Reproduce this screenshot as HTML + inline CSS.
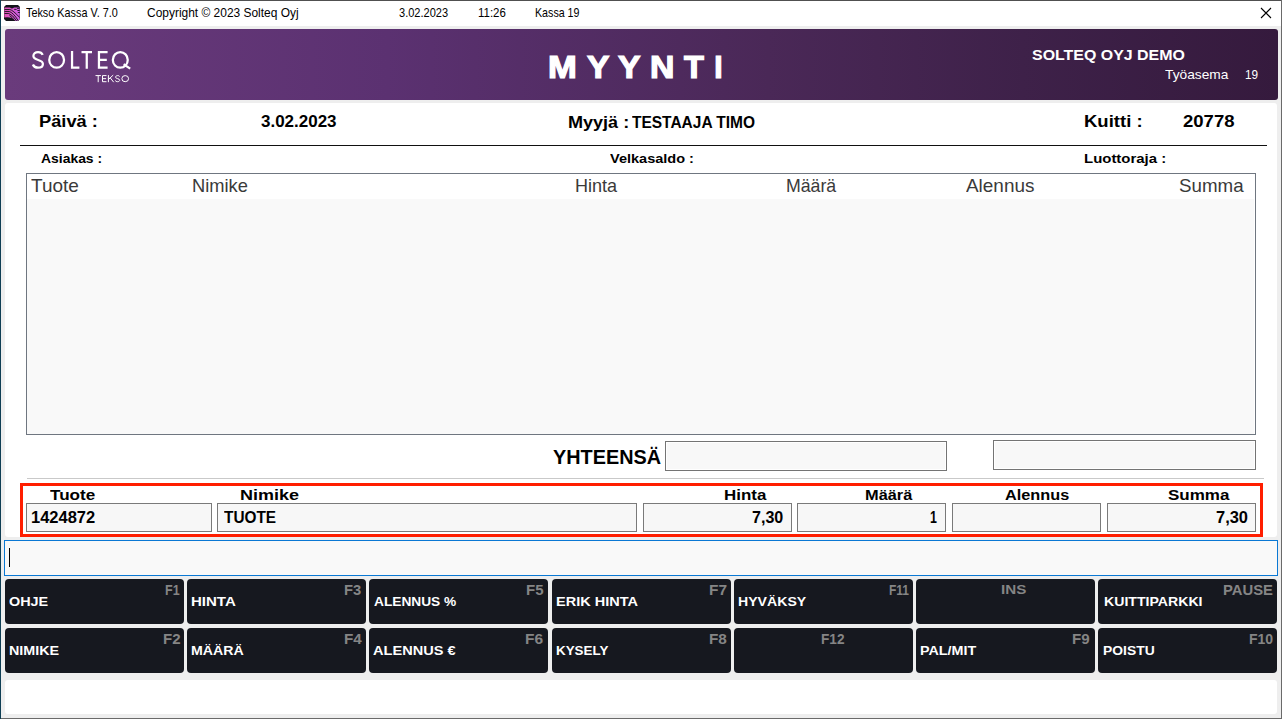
<!DOCTYPE html>
<html><head><meta charset="utf-8"><style>
html,body{margin:0;padding:0;width:1282px;height:719px;overflow:hidden;background:#eee}
div,span,svg{position:absolute}
span{font-family:"Liberation Sans",sans-serif;line-height:1;white-space:pre;transform-origin:0 0}
</style></head><body>
<div style="left:0px;top:0px;width:1282px;height:719px;background:#eeeeee"></div><div style="left:1px;top:1px;width:1280px;height:25px;background:#ffffff"></div><div style="left:0px;top:0px;width:1282px;height:1px;background:#505050"></div><div style="left:0px;top:0px;width:1px;height:719px;background:#0f3e54"></div><div style="left:1281px;top:0px;width:1px;height:719px;background:#6a6a6a"></div><div style="left:1px;top:718px;width:1281px;height:1px;background:#6a6a6a"></div><div style="left:5px;top:29px;width:1273px;height:71px;background:linear-gradient(90deg,#6a3b7c 0%,#5b3171 30%,#4a2857 60%,#3e2149 80%,#351a3d 100%);border-radius:3px"></div><div style="left:5px;top:103px;width:1272px;height:434px;background:#fff;border-radius:3px"></div><div style="left:20px;top:145px;width:1247px;height:1px;background:#111"></div><div style="left:26px;top:173px;width:1230px;height:262px;background:#fff;border:1px solid #6f7680;box-sizing:border-box"></div><div style="left:27px;top:199px;width:1227px;height:235px;background:#f9f9f9"></div><div style="left:665px;top:441px;width:282px;height:30px;background:#f8f8f8;border:1px solid #747474;box-shadow:inset 0 0 0 1px #fff;box-sizing:border-box"></div><div style="left:993px;top:440px;width:263px;height:30px;background:#f8f8f8;border:1px solid #747474;box-shadow:inset 0 0 0 1px #fff;box-sizing:border-box"></div><div style="left:27px;top:478px;width:1237px;height:1px;background:#c9c9c9"></div><div style="left:20px;top:483px;width:1243px;height:54px;border:3px solid #ff1e00;box-sizing:border-box"></div><div style="left:26px;top:503px;width:186px;height:29px;background:#f7f7f7;border:1px solid #7a7a7a;box-sizing:border-box"></div><div style="left:217px;top:503px;width:420px;height:29px;background:#f7f7f7;border:1px solid #7a7a7a;box-sizing:border-box"></div><div style="left:643px;top:503px;width:149px;height:29px;background:#f7f7f7;border:1px solid #7a7a7a;box-sizing:border-box"></div><div style="left:797px;top:503px;width:149px;height:29px;background:#f7f7f7;border:1px solid #7a7a7a;box-sizing:border-box"></div><div style="left:952px;top:503px;width:149px;height:29px;background:#f7f7f7;border:1px solid #7a7a7a;box-sizing:border-box"></div><div style="left:1107px;top:503px;width:149px;height:29px;background:#f7f7f7;border:1px solid #7a7a7a;box-sizing:border-box"></div><div style="left:4px;top:540px;width:1274px;height:36px;background:#f9f9f9;border:1px solid #0a78d4;box-sizing:border-box"></div><div style="left:9px;top:548px;width:1px;height:19px;background:#000"></div><div style="left:5px;top:579px;width:179px;height:45px;background:#16181f;border-radius:4px"></div><div style="left:187px;top:579px;width:179px;height:45px;background:#16181f;border-radius:4px"></div><div style="left:369px;top:579px;width:179px;height:45px;background:#16181f;border-radius:4px"></div><div style="left:552px;top:579px;width:179px;height:45px;background:#16181f;border-radius:4px"></div><div style="left:734px;top:579px;width:179px;height:45px;background:#16181f;border-radius:4px"></div><div style="left:916px;top:579px;width:179px;height:45px;background:#16181f;border-radius:4px"></div><div style="left:1098px;top:579px;width:179px;height:45px;background:#16181f;border-radius:4px"></div><div style="left:5px;top:628px;width:179px;height:45px;background:#16181f;border-radius:4px"></div><div style="left:187px;top:628px;width:179px;height:45px;background:#16181f;border-radius:4px"></div><div style="left:369px;top:628px;width:179px;height:45px;background:#16181f;border-radius:4px"></div><div style="left:552px;top:628px;width:179px;height:45px;background:#16181f;border-radius:4px"></div><div style="left:734px;top:628px;width:179px;height:45px;background:#16181f;border-radius:4px"></div><div style="left:916px;top:628px;width:179px;height:45px;background:#16181f;border-radius:4px"></div><div style="left:1098px;top:628px;width:179px;height:45px;background:#16181f;border-radius:4px"></div><div style="left:5px;top:680px;width:1272px;height:34px;background:#fff;border-radius:3px"></div>
<svg style="position:absolute;left:4px;top:5px" width="16" height="16" viewBox="0 0 16 16">
<defs><linearGradient id="ig" x1="0" x2="1" y1="0" y2="0"><stop offset="0" stop-color="#e04fb4"/><stop offset="1" stop-color="#cf5fe6"/></linearGradient></defs>
<path d="M2,0 H14 L16,2 V14 L14,16 H2 L0,14 V2 Z" fill="#13141a"/>
<path d="M0.3,2.6 L6,2.6 Q8,4.4 10,2.6 L15.7,2.6 L15.7,14 L14,15.7 L11,15.7 Q7,11.2 0.3,12.6 Z" fill="url(#ig)"/>
<g fill="none" stroke="#13141a" stroke-width="0.9">
<path d="M0.5,4.5 H5.8 Q9,5.2 15.8,12.6"/>
<path d="M0.5,6.5 H5.2 Q9,7.4 14.2,15.6"/>
<path d="M0.5,8.5 H4.8 Q8.4,9.6 12.6,15.8"/>
<path d="M5.5,10.6 Q7.8,11.8 10.8,15.8"/>
<path d="M10.2,4.4 H12.6 M13,3.4 H15.6 M13.4,5.5 H15.6 M13.8,7.5 H15.8"/>
</g></svg>
<svg style="position:absolute;left:0;top:0" width="200" height="100" viewBox="0 0 200 100">
<g fill="none" stroke="#fff" stroke-width="2.25" stroke-linecap="butt">
<path d="M42.7,54.9 C41.9,53.0 40.2,52.1 38.1,52.1 C35.4,52.1 33.4,53.7 33.4,56.0 C33.4,61.0 42.9,59.0 42.9,63.9 C42.9,66.3 40.8,67.7 38.0,67.7 C35.5,67.7 33.7,66.5 32.9,64.5"/>
<ellipse cx="56.65" cy="59.9" rx="7.4" ry="7.8"/>
<path d="M72.05,51.05 V67.7 H79.4"/>
<path d="M81.5,52.1 H92 M86.75,52.1 V68.75"/>
<path d="M107.6,52.1 H98.95 V67.7 H107.6 M98.95,59.9 H106.8"/>
<ellipse cx="120.3" cy="59.9" rx="7.45" ry="7.8"/>
<path d="M123.6,64.2 L130.2,68.6"/>
</g>
<g fill="none" stroke="#fff" stroke-width="1.0">
<path d="M95.5,75.6 H100.9 M98.2,75.6 V82.2"/>
<path d="M106.5,75.6 H102.5 V81.7 H106.5 M102.5,78.65 H106.1"/>
<path d="M108.4,75.1 V82.2 M113.2,75.1 L108.5,79.4 M110.2,77.8 L113.7,82.2"/>
<path d="M119.6,76.5 C119.2,75.8 118.5,75.6 117.6,75.6 C116.4,75.6 115.6,76.2 115.6,77.2 C115.6,79.0 119.7,78.3 119.7,80.2 C119.7,81.2 118.8,81.7 117.5,81.7 C116.4,81.7 115.6,81.2 115.2,80.5"/>
<ellipse cx="125.2" cy="78.65" rx="3.35" ry="3.05"/>
</g></svg>
<svg style="position:absolute;left:1260px;top:7px" width="12" height="12" viewBox="0 0 12 12">
<path d="M1 1 L11 11 M11 1 L1 11" stroke="#000" stroke-width="1.1"/></svg>
<span style="left:547.85px;top:51.800000000000004px;font-size:30px;font-weight:700;color:#fff;-webkit-text-stroke:1.2px #fff;transform:scale(1.1522,1.02)">M</span><span style="left:586.6px;top:51.800000000000004px;font-size:30px;font-weight:700;color:#fff;-webkit-text-stroke:1.2px #fff;transform:scale(1.12,1.02)">Y</span><span style="left:617.5px;top:51.800000000000004px;font-size:30px;font-weight:700;color:#fff;-webkit-text-stroke:1.2px #fff;transform:scale(1.125,1.02)">Y</span><span style="left:649.87px;top:51.800000000000004px;font-size:30px;font-weight:700;color:#fff;-webkit-text-stroke:1.2px #fff;transform:scale(1.1263,1.02)">N</span><span style="left:683.6px;top:51.800000000000004px;font-size:30px;font-weight:700;color:#fff;-webkit-text-stroke:1.2px #fff;transform:scale(1.0842,1.02)">T</span><span style="left:714.3px;top:51.800000000000004px;font-size:30px;font-weight:700;color:#fff;-webkit-text-stroke:1.2px #fff;transform:scale(1.0,1.02)">I</span><span style="left:25.5px;top:5.91px;font-size:13.04px;font-weight:400;color:#000;transform:scaleX(0.8318);">Tekso Kassa V. 7.0</span><span style="left:146.68px;top:5.91px;font-size:13.04px;font-weight:400;color:#000;transform:scaleX(0.9171);">Copyright © 2023 Solteq Oyj</span><span style="left:399.15px;top:5.91px;font-size:13.04px;font-weight:400;color:#000;transform:scaleX(0.8464);">3.02.2023</span><span style="left:477.72px;top:5.91px;font-size:13.04px;font-weight:400;color:#000;transform:scaleX(0.88);">11:26</span><span style="left:534.58px;top:5.91px;font-size:13.04px;font-weight:400;color:#000;transform:scaleX(0.8189);">Kassa 19</span><span style="left:1032.24px;top:47.25px;font-size:15.0px;font-weight:700;color:#fff;transform:scaleX(1.0627);">SOLTEQ OYJ DEMO</span><span style="left:1165.3px;top:68.42px;font-size:13.62px;font-weight:400;color:#fff;transform:scaleX(1.0111);">Työasema</span><span style="left:1245.34px;top:68.42px;font-size:13.62px;font-weight:400;color:#fff;transform:scaleX(0.8643);">19</span><span style="left:39.45px;top:113.22px;font-size:17.39px;font-weight:700;color:#000;transform:scaleX(1.0509);">Päivä :</span><span style="left:261.22px;top:113.22px;font-size:17.39px;font-weight:700;color:#000;transform:scaleX(0.9776);">3.02.2023</span><span style="left:567.63px;top:114.71px;font-size:16.81px;font-weight:700;color:#000;transform:scaleX(1.0741);">Myyjä :</span><span style="left:632.4px;top:114.71px;font-size:16.81px;font-weight:700;color:#000;transform:scaleX(0.9218);">TESTAAJA TIMO</span><span style="left:1083.83px;top:113.22px;font-size:17.39px;font-weight:700;color:#000;transform:scaleX(1.0654);">Kuitti :</span><span style="left:1183.03px;top:113.22px;font-size:17.39px;font-weight:700;color:#000;transform:scaleX(1.066);">20778</span><span style="left:40.5px;top:151.61px;font-size:13.41px;font-weight:700;color:#000;transform:scaleX(1.0379);">Asiakas :</span><span style="left:610.3px;top:153.28px;font-size:12.61px;font-weight:700;color:#000;transform:scaleX(1.1514);">Velkasaldo :</span><span style="left:1083.71px;top:153.28px;font-size:12.61px;font-weight:700;color:#000;transform:scaleX(1.1851);">Luottoraja :</span><span style="left:31.2px;top:177.23px;font-size:18.55px;font-weight:400;color:#3a3a3a;transform:scaleX(1.0239);">Tuote</span><span style="left:191.51px;top:177.23px;font-size:18.55px;font-weight:400;color:#3a3a3a;transform:scaleX(0.9873);">Nimike</span><span style="left:575.43px;top:177.23px;font-size:18.55px;font-weight:400;color:#3a3a3a;transform:scaleX(0.9738);">Hinta</span><span style="left:785.54px;top:177.23px;font-size:18.55px;font-weight:400;color:#3a3a3a;transform:scaleX(0.9558);">Määrä</span><span style="left:966.0px;top:177.23px;font-size:18.55px;font-weight:400;color:#3a3a3a;transform:scaleX(1.0212);">Alennus</span><span style="left:1178.69px;top:177.23px;font-size:18.55px;font-weight:400;color:#3a3a3a;transform:scaleX(1.0111);">Summa</span><span style="left:553.34px;top:446.51px;font-size:20.58px;font-weight:700;color:#000;transform:scaleX(0.964);">YHTEENSÄ</span><span style="left:49.6px;top:487.56px;font-size:14.64px;font-weight:700;color:#000;transform:scaleX(1.1684);">Tuote</span><span style="left:240.27px;top:487.56px;font-size:14.64px;font-weight:700;color:#000;transform:scaleX(1.2304);">Nimike</span><span style="left:723.54px;top:487.56px;font-size:14.64px;font-weight:700;color:#000;transform:scaleX(1.1583);">Hinta</span><span style="left:865.48px;top:487.56px;font-size:14.64px;font-weight:700;color:#000;transform:scaleX(1.1195);">Määrä</span><span style="left:1005.29px;top:487.56px;font-size:14.64px;font-weight:700;color:#000;transform:scaleX(1.1125);">Alennus</span><span style="left:1167.94px;top:487.56px;font-size:14.64px;font-weight:700;color:#000;transform:scaleX(1.1635);">Summa</span><span style="left:30.98px;top:509.2px;font-size:16.23px;font-weight:700;color:#000;transform:scaleX(1.0164);">1424872</span><span style="left:224.0px;top:509.2px;font-size:16.23px;font-weight:700;color:#000;transform:scaleX(0.9473);">TUOTE</span><span style="left:752.41px;top:509.2px;font-size:16.23px;font-weight:700;color:#000;transform:scaleX(0.99);">7,30</span><span style="left:929.54px;top:509.2px;font-size:16.23px;font-weight:700;color:#000;transform:scaleX(0.7625);">1</span><span style="left:1216.19px;top:509.2px;font-size:16.23px;font-weight:700;color:#000;transform:scaleX(1.0133);">7,30</span><span style="left:9.22px;top:596.16px;font-size:12.75px;font-weight:700;color:#fff;transform:scaleX(1.1288);">OHJE</span><span style="left:191.32px;top:596.16px;font-size:12.75px;font-weight:700;color:#fff;transform:scaleX(1.1784);">HINTA</span><span style="left:374.4px;top:596.16px;font-size:12.75px;font-weight:700;color:#fff;transform:scaleX(1.075);">ALENNUS %</span><span style="left:556.06px;top:596.16px;font-size:12.75px;font-weight:700;color:#fff;transform:scaleX(1.138);">ERIK HINTA</span><span style="left:738.49px;top:596.16px;font-size:12.75px;font-weight:700;color:#fff;transform:scaleX(1.1067);">HYVÄKSY</span><span style="left:1104.29px;top:596.16px;font-size:12.75px;font-weight:700;color:#fff;transform:scaleX(1.1069);">KUITTIPARKKI</span><span style="left:9.29px;top:643.54px;font-size:13.48px;font-weight:700;color:#fff;transform:scaleX(1.0641);">NIMIKE</span><span style="left:191.45px;top:643.54px;font-size:13.48px;font-weight:700;color:#fff;transform:scaleX(1.051);">MÄÄRÄ</span><span style="left:373.32px;top:643.54px;font-size:13.48px;font-weight:700;color:#fff;transform:scaleX(1.0813);">ALENNUS €</span><span style="left:556.21px;top:643.54px;font-size:13.48px;font-weight:700;color:#fff;transform:scaleX(0.9941);">KYSELY</span><span style="left:920.44px;top:643.54px;font-size:13.48px;font-weight:700;color:#fff;transform:scaleX(1.0615);">PAL/MIT</span><span style="left:1102.57px;top:643.54px;font-size:13.48px;font-weight:700;color:#fff;transform:scaleX(1.0306);">POISTU</span><span style="left:165.1px;top:584.17px;font-size:13.91px;font-weight:700;color:#858585;transform:scaleX(0.9);">F1</span><span style="left:344.34px;top:584.17px;font-size:13.91px;font-weight:700;color:#858585;transform:scaleX(1.06);">F3</span><span style="left:526.22px;top:584.17px;font-size:13.91px;font-weight:700;color:#858585;transform:scaleX(1.08);">F5</span><span style="left:708.59px;top:584.17px;font-size:13.91px;font-weight:700;color:#858585;transform:scaleX(1.1133);">F7</span><span style="left:888.54px;top:584.17px;font-size:13.91px;font-weight:700;color:#858585;transform:scaleX(0.8636);">F11</span><span style="left:1000.57px;top:582.54px;font-size:13.48px;font-weight:700;color:#858585;transform:scaleX(1.1286);">INS</span><span style="left:1223.08px;top:582.68px;font-size:14.49px;font-weight:700;color:#858585;transform:scaleX(1.0234);">PAUSE</span><span style="left:162.51px;top:633.3px;font-size:13.77px;font-weight:700;color:#858585;transform:scaleX(1.0933);">F2</span><span style="left:343.59px;top:633.3px;font-size:13.77px;font-weight:700;color:#858585;transform:scaleX(1.1067);">F4</span><span style="left:525.47px;top:633.3px;font-size:13.77px;font-weight:700;color:#858585;transform:scaleX(1.1267);">F6</span><span style="left:708.59px;top:633.3px;font-size:13.77px;font-weight:700;color:#858585;transform:scaleX(1.1133);">F8</span><span style="left:820.71px;top:633.3px;font-size:13.77px;font-weight:700;color:#858585;transform:scaleX(0.9909);">F12</span><span style="left:1072.4px;top:633.3px;font-size:13.77px;font-weight:700;color:#858585;transform:scaleX(1.1);">F9</span><span style="left:1248.78px;top:633.3px;font-size:13.77px;font-weight:700;color:#858585;transform:scaleX(1.0182);">F10</span>
</body></html>
